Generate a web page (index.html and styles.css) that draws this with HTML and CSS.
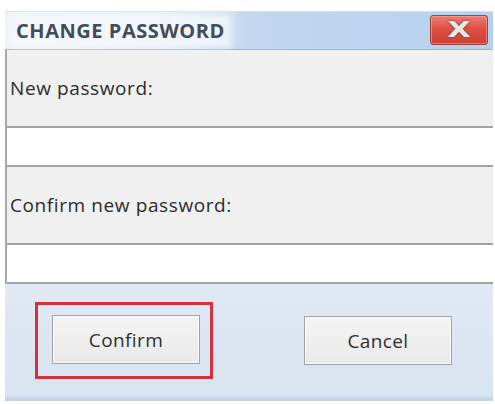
FILE: index.html
```html
<!DOCTYPE html>
<html lang="en">
<head>
<meta charset="utf-8">
<title>Change Password</title>
<link rel="stylesheet" href="styles.css">
</head>
<body>
<div class="dialog">
  <div class="titlebar">
    <span class="title">CHANGE PASSWORD</span>
    <button class="close" aria-label="Close"><span class="close-x">X</span></button>
  </div>
  <div class="body">
    <div class="label-row"><span class="label">New password:</span></div>
    <div class="input-row"></div>
    <div class="label-row"><span class="label">Confirm new password:</span></div>
    <div class="input-row"></div>
  </div>
  <div class="footer">
    <div class="highlight">
      <button class="btn">Confirm</button>
    </div>
    <button class="btn">Cancel</button>
  </div>
</div>
</body>
</html>
```
FILE: styles.css
```css
html, body {
  margin: 0;
  padding: 0;
  background: #ffffff;
}

body {
  font-family: "Open Sans", "Noto Sans", sans-serif;
  width: 495px;
  height: 404px;
  overflow: hidden;
}

.dialog {
  margin: 11px 2px 0 5px;
  width: 488px;
  display: flex;
  flex-direction: column;
}

.titlebar {
  height: 39px;
  box-sizing: border-box;
  display: flex;
  align-items: center;
  justify-content: space-between;
  padding: 2px 5px 3px 8px;
  background: linear-gradient(to right, #eef3f9 0%, #e4edf7 32%, #c2d8f0 50%, #b6d0ee 100%);
  border-bottom: 1px solid #9fb3c9;
  border-top: 1px solid #d5dee9;
}

.title {
  font-weight: 700;
  font-size: 20px;
  color: #444c57;
  letter-spacing: 0.55px;
  padding: 0 3px;
  background: rgba(246, 249, 252, 0.75);
  box-shadow: 0 0 8px 4px rgba(246, 249, 252, 0.75);
}

.close {
  width: 58px;
  height: 30px;
  border: 1px solid #a0413a;
  border-radius: 3px;
  background: linear-gradient(to bottom, #ee7d72 0%, #de5246 45%, #cc4034 100%);
  display: flex;
  align-items: center;
  justify-content: center;
  padding: 0;
  box-shadow: inset 0 0 0 1px rgba(255, 175, 165, 0.5);
}

.close-x {
  display: inline-block;
  font-family: "DejaVu Sans", sans-serif;
  font-weight: 700;
  font-size: 21px;
  color: #ece8e8;
  text-shadow: 0 0 2px #6d4a48, 0 0 1px #6d4a48;
  line-height: 1;
  transform: scale(1.45, 1);
}

.body {
  border-left: 2px solid #a8a8a8;
  display: flex;
  flex-direction: column;
}

.label-row {
  background: #f0f0f0;
  height: 76px;
  display: flex;
  align-items: center;
  padding-left: 3px;
  border-bottom: 2px solid #a3a3a3;
}

.label {
  font-size: 19px;
  letter-spacing: 0.6px;
  color: #2c2c2c;
}

.input-row {
  background: #ffffff;
  height: 37px;
  border-bottom: 2px solid #a3a3a3;
}

.footer {
  height: 117px;
  box-sizing: border-box;
  background: linear-gradient(to bottom, #e0e9f4, #d9e4f1);
  border-bottom: 4px solid #c3d4e8;
  display: flex;
  align-items: center;
  padding-left: 30px;
  gap: 91px;
}

.highlight {
  border: 3px solid #d5303d;
  padding: 10px 10px 12px 14px;
  display: flex;
}

.btn {
  width: 148px;
  height: 49px;
  border: 1px solid #a2a2a2;
  background: linear-gradient(to bottom, #f4f4f4, #e9e9e9);
  box-shadow: inset 0 0 0 1px #fbfbfb;
  font-family: "Open Sans", "Noto Sans", sans-serif;
  font-size: 19px;
  letter-spacing: 0.4px;
  color: #2f2f2f;
  padding: 0;
}
```
